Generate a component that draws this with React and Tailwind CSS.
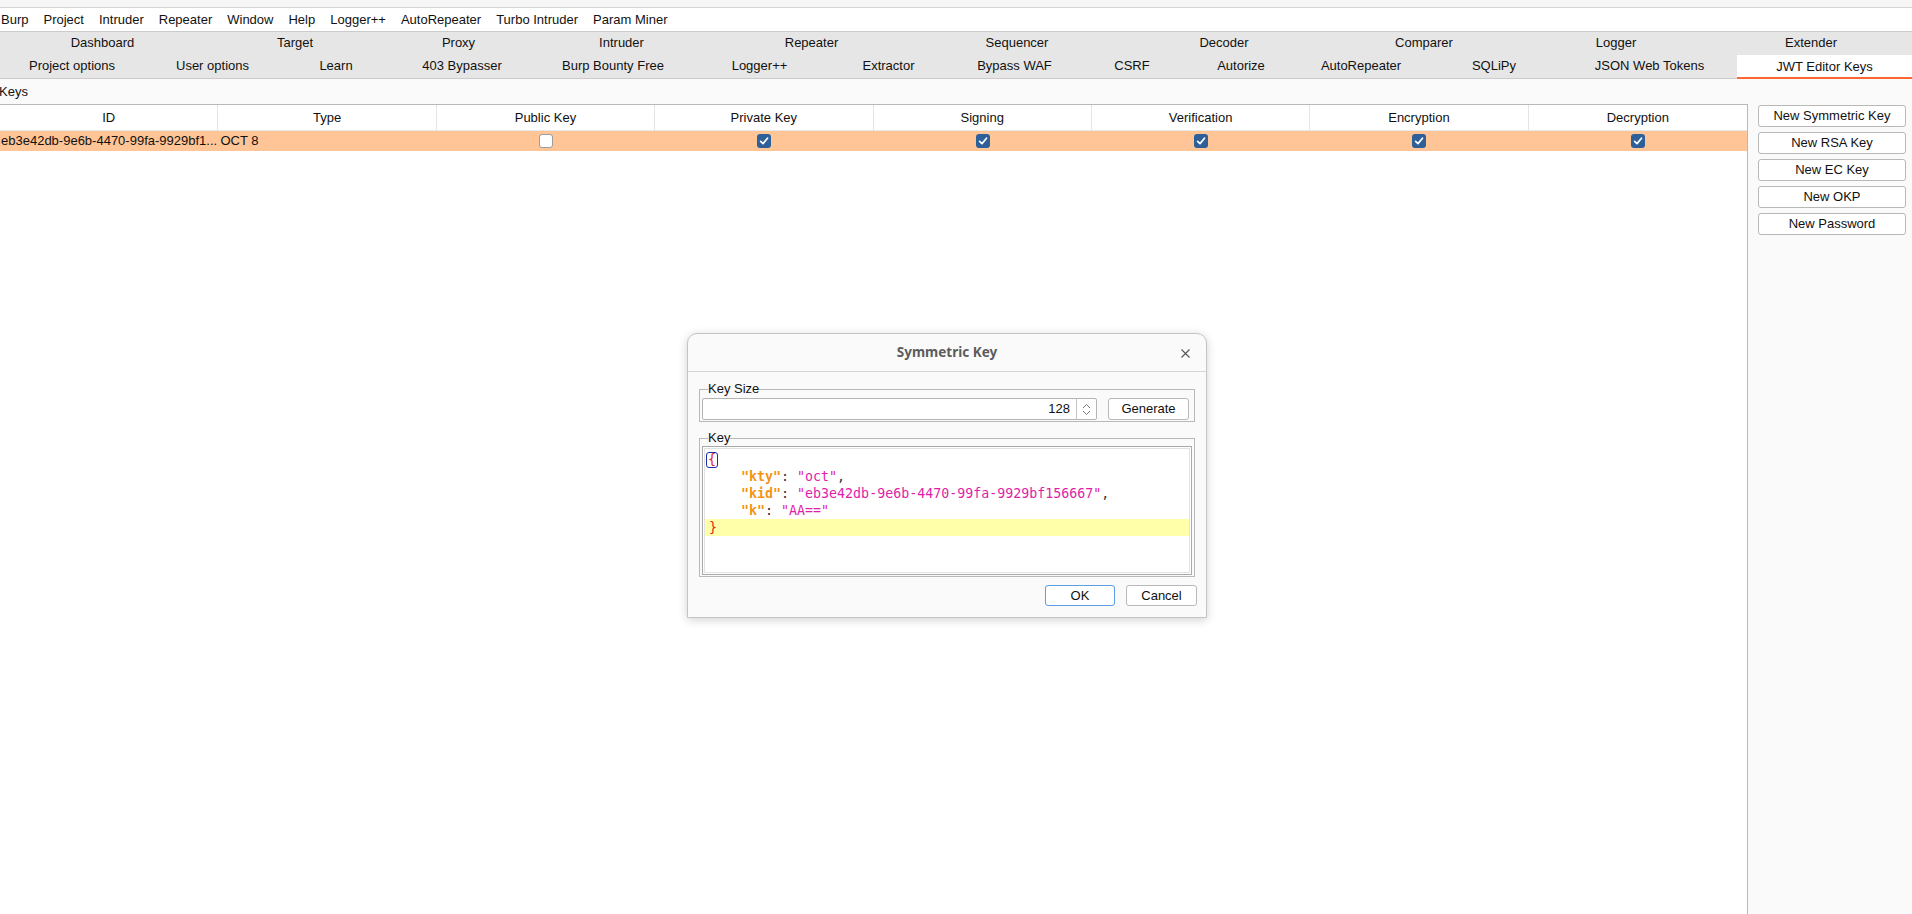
import React from 'react';

const menus = ['Burp', 'Project', 'Intruder', 'Repeater', 'Window', 'Help', 'Logger++', 'AutoRepeater', 'Turbo Intruder', 'Param Miner'];

// widths follow the run layout of the tab pane
const tabsTop = [
  { label: 'Dashboard', w: 'w-[205px]' },
  { label: 'Target', w: 'w-[180px]' },
  { label: 'Proxy', w: 'w-[147px]' },
  { label: 'Intruder', w: 'w-[179px]' },
  { label: 'Repeater', w: 'w-[201px]' },
  { label: 'Sequencer', w: 'w-[210px]' },
  { label: 'Decoder', w: 'w-[204px]' },
  { label: 'Comparer', w: 'w-[196px]' },
  { label: 'Logger', w: 'w-[188px]' },
  { label: 'Extender', w: 'flex-1' },
];

const tabsBottom = [
  { label: 'Project options', w: 'w-[144px]' },
  { label: 'User options', w: 'w-[137px]' },
  { label: 'Learn', w: 'w-[110px]' },
  { label: '403 Bypasser', w: 'w-[142px]' },
  { label: 'Burp Bounty Free', w: 'w-[160px]' },
  { label: 'Logger++', w: 'w-[133px]' },
  { label: 'Extractor', w: 'w-[125px]' },
  { label: 'Bypass WAF', w: 'w-[127px]' },
  { label: 'CSRF', w: 'w-[108px]' },
  { label: 'Autorize', w: 'w-[110px]' },
  { label: 'AutoRepeater', w: 'w-[130px]' },
  { label: 'SQLiPy', w: 'w-[136px]' },
  { label: 'JSON Web Tokens', w: 'w-[175px]' },
  { label: 'JWT Editor Keys', w: 'flex-1', active: true },
];

const columns = ['ID', 'Type', 'Public Key', 'Private Key', 'Signing', 'Verification', 'Encryption', 'Decryption'];

const sideButtons = ['New Symmetric Key', 'New RSA Key', 'New EC Key', 'New OKP', 'New Password'];

const Check = ({ checked }) =>
  checked ? (
    <span className="w-[14px] h-[14px] rounded-[3px] bg-[#2d6099] flex items-center justify-center">
      <svg width="10" height="10" viewBox="0 0 10 10" fill="none">
        <path d="M1.6 5.3 L4 7.6 L8.5 2.2" stroke="#fff" strokeWidth="1.7" strokeLinecap="round" strokeLinejoin="round" />
      </svg>
    </span>
  ) : (
    <span className="w-[14px] h-[14px] rounded-[3px] bg-white border border-[#9c9c9c]" />
  );

const Key = ({ children }) => <span className="text-[#f39414] font-bold">{children}</span>;
const Str = ({ children }) => <span className="text-[#e01ea8]">{children}</span>;

const SymmetricKeyDialog = () => (
  <div className="absolute left-[687px] top-[333px] w-[520px] h-[285px] flex flex-col bg-[#fafafa] border border-[#c4c4c4] rounded-t-[10px] shadow-[0_2px_10px_rgba(0,0,0,0.18)]">
    {/* Title bar */}
    <div className="h-[38px] shrink-0 relative flex items-center justify-center border-b border-[#d6d6d6] rounded-t-[10px]">
      <span className="font-['Noto_Sans',sans-serif] font-bold text-[13.5px] text-[#5c5c5c]">Symmetric Key</span>
      <svg className="absolute right-[16px] top-[15px]" width="9" height="9" viewBox="0 0 9 9">
        <path d="M0.5 0.5 L8.5 8.5 M8.5 0.5 L0.5 8.5" stroke="#555" strokeWidth="1.1" />
      </svg>
    </div>

    <div className="flex-1 flex flex-col px-[11px] pt-[10px]">
      {/* Key Size */}
      <fieldset className="border border-[#b9b9b9] h-[40px] px-[2px] pt-[2px] m-0 min-w-0">
        <legend className="px-0 ml-[6px] text-[13px] leading-[14px] text-[#111]">Key Size</legend>
        <div className="flex items-center gap-[11px]">
          <div className="w-[395px] h-[22px] flex bg-white border border-[#b4b4b4] rounded-[2px]">
            <div className="flex-1 flex items-center justify-end pr-[6px] text-[13px] text-[#111]">128</div>
            <div className="w-[20px] border-l border-[#c4c4c4] flex items-center justify-center">
              <svg width="9" height="13" viewBox="0 0 9 13" fill="none">
                <path d="M1 5 L4.5 1.5 L8 5 M1 8 L4.5 11.5 L8 8" stroke="#777" strokeWidth="1" />
              </svg>
            </div>
          </div>
          <button className="w-[81px] h-[22px] bg-white border border-[#b8b8b8] rounded-[3px] text-[13px] text-[#111]">Generate</button>
        </div>
      </fieldset>

      {/* Key */}
      <fieldset className="border border-[#b9b9b9] h-[146px] mt-[9px] px-[2px] pt-[1px] m-0 min-w-0">
        <legend className="px-0 ml-[6px] text-[13px] leading-[14px] text-[#111]">Key</legend>
        <div className="h-[129px] bg-white border border-[#a9a9a9] p-px">
          <div className="h-full border border-[#e2e2e2] pt-[2px] font-['DejaVu_Sans_Mono',monospace] text-[13.3px] leading-[17px] text-[#333] whitespace-pre">
            <div className="pl-[3px]">
              <span className="inline-block border border-[#1f2aa8] rounded-[3px] text-[#e52222] leading-[14px] px-[1px] -ml-[2px]">{'{'}</span>
            </div>
            <div className="pl-[4px]">{'    '}<Key>"kty"</Key>: <Str>"oct"</Str>,</div>
            <div className="pl-[4px]">{'    '}<Key>"kid"</Key>: <Str>"eb3e42db-9e6b-4470-99fa-9929bf156667"</Str>,</div>
            <div className="pl-[4px]">{'    '}<Key>"k"</Key>: <Str>"AA=="</Str></div>
            <div className="pl-[4px] bg-[#ffffaa] text-[#e52222]">{'}'}</div>
          </div>
        </div>
      </fieldset>

      <div className="flex justify-end gap-[11px] mt-[8px] -mr-[2px]">
        <button className="w-[70px] h-[21px] bg-white border border-[#5b9ee2] rounded-[3px] text-[13px] text-[#111]">OK</button>
        <button className="w-[71px] h-[21px] bg-white border border-[#b8b8b8] rounded-[3px] text-[13px] text-[#111]">Cancel</button>
      </div>
    </div>
  </div>
);

export default function App() {
  return (
    <div className="w-[1912px] h-[914px] relative overflow-hidden bg-[#fafafa] font-['Liberation_Sans',Arial,sans-serif] text-[13px] text-[#111]">
      {/* top strip */}
      <div className="h-[8px] bg-[#f6f6f6] border-b border-[#d4d4d4]" />

      {/* Menu bar */}
      <div className="h-[23px] bg-white flex items-center gap-[15px] pl-[1px]">
        {menus.map(m => (
          <span key={m}>{m}</span>
        ))}
      </div>

      {/* Tabs */}
      <div className="bg-[#e6e6e6] border-t border-b border-[#cbcbcb]">
        <div className="flex h-[22px] items-center">
          {tabsTop.map(t => (
            <div key={t.label} className={`${t.w} shrink-0 text-center whitespace-nowrap`}>{t.label}</div>
          ))}
        </div>
        <div className="flex h-[24px]">
          {tabsBottom.map(t => (
            <div
              key={t.label}
              className={`${t.w} shrink-0 whitespace-nowrap flex items-center justify-center relative ${t.active ? 'bg-white mt-px' : ''}`}
            >
              {t.label}
              {t.active && <span className="absolute left-0 right-0 -bottom-[1px] h-[2px] bg-[#ff6633]" />}
            </div>
          ))}
        </div>
      </div>

      {/* Keys label */}
      <div className="h-[25px] flex items-center -ml-[1px]">Keys</div>

      <div className="flex h-[810px]">
        {/* Table */}
        <div className="w-[1748px] bg-white border-t border-r border-[#b8b8b8]">
          <div className="grid grid-cols-8 h-[26px] border-b border-[#e8e8e8]">
            {columns.map((c, i) => (
              <div key={c} className={`flex items-center justify-center ${i < 7 ? 'border-r border-[#e4e4e4]' : ''}`}>
                {c}
              </div>
            ))}
          </div>
          <div className="grid grid-cols-8 h-[20px] bg-[#ffc597] items-center">
            <div className="pl-[1px] whitespace-nowrap overflow-hidden">eb3e42db-9e6b-4470-99fa-9929bf1...</div>
            <div className="pl-[2px]">OCT 8</div>
            {[false, true, true, true, true, true].map((v, i) => (
              <div key={i} className="flex justify-center">
                <Check checked={v} />
              </div>
            ))}
          </div>
        </div>

        {/* Side buttons */}
        <div className="flex-1 flex flex-col gap-[5px] pt-[1px] pl-[10px] pr-[6px]">
          {sideButtons.map(b => (
            <button key={b} className="h-[22px] bg-white border border-[#b8b8b8] rounded-[3px] text-[13px] text-[#111]">
              {b}
            </button>
          ))}
        </div>
      </div>

      <SymmetricKeyDialog />
    </div>
  );
}
